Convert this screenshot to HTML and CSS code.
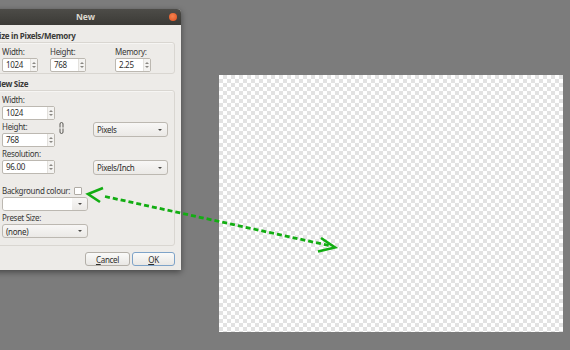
FILE: index.html
```html
<!DOCTYPE html>
<html>
<head>
<meta charset="utf-8">
<link rel="stylesheet" href="styles.css">
</head>
<body>
<div class="desk">
  <div class="dialog">
    <div class="titlebar">
      <span class="title">New</span>
      <span class="close"></span>
    </div>
    <div class="content">
      <div class="sec">Size in Pixels/Memory</div>
      <div class="group g1">
        <div class="cell"><div class="lbl">Width:</div><div class="spin w36"><span class="field">1024</span><span class="arrows"><i class="up"></i><i class="dn"></i></span></div></div>
        <div class="cell"><div class="lbl">Height:</div><div class="spin w36"><span class="field">768</span><span class="arrows"><i class="up"></i><i class="dn"></i></span></div></div>
        <div class="cell"><div class="lbl">Memory:</div><div class="spin w36"><span class="field">2.25</span><span class="arrows"><i class="up"></i><i class="dn"></i></span></div></div>
      </div>
      <div class="sec sec2">New Size</div>
      <div class="group g2">
        <div class="grid">
          <div class="lbl r1">Width:</div>
          <div class="spin w53 r2"><span class="field">1024</span><span class="arrows"><i class="up"></i><i class="dn"></i></span></div>
          <div class="lbl r3">Height:</div>
          <div class="spin w53 r4"><span class="field">768</span><span class="arrows"><i class="up"></i><i class="dn"></i></span></div>
          <div class="lbl r5">Resolution:</div>
          <div class="spin w53 r6"><span class="field">96.00</span><span class="arrows"><i class="up"></i><i class="dn"></i></span></div>
          <svg class="chain" width="5" height="12" viewBox="0 0 5 12"><path d="M1 5.5V2a1.5 1.5 0 0 1 3 0v3.5M1 6.5V10a1.5 1.5 0 0 0 3 0V6.5" fill="none" stroke="#5a5955" stroke-width="1"/></svg>
          <div class="combo pix"><span>Pixels</span><i class="caret"></i></div>
          <div class="combo ppi"><span>Pixels/Inch</span><i class="caret"></i></div>
        </div>
        <div class="bgrow lbl">Background colour:<span class="swatch"></span></div>
        <div class="colcombo"><span class="white"></span><span class="btnpart"><i class="caret"></i></span></div>
        <div class="lbl preset">Preset Size:</div>
        <div class="combo wide"><span>(none)</span><i class="caret"></i></div>
      </div>
      <div class="buttons">
        <div class="btn cancel"><u>C</u>ancel</div>
        <div class="btn ok"><u>O</u>K</div>
      </div>
    </div>
  </div>
  <div class="canvas"></div>
</div>
<svg class="arrow" width="570" height="350" viewBox="0 0 570 350">
  <polyline points="103,188 88,194 100,202" fill="none" stroke="#12ad12" stroke-width="2.6" stroke-linejoin="miter"/>
  <line x1="105" y1="196.5" x2="329" y2="245.5" stroke="#12ad12" stroke-width="2.8" stroke-dasharray="5 3"/>
  <polyline points="321,238 335,247.5 318,251.5" fill="none" stroke="#12ad12" stroke-width="2.6"/>
</svg>
</body>
</html>
```

FILE: styles.css
```css
* { box-sizing: border-box; }
body {
  margin: 0;
  width: 570px;
  height: 350px;
  background: #7c7c7c;
  overflow: hidden;
  position: relative;
  font-family: "Noto Sans", "Liberation Sans", Arial, sans-serif;
  font-size: 8px;
  letter-spacing: -0.3px;
  color: #3a3a38;
}
.desk { display: flex; align-items: flex-start; }
.dialog {
  flex: none;
  margin: 9px 0 0 -13px;
  width: 194px;
  background: #edebe8;
  border-radius: 4px 4px 0 0;
  box-shadow: 0 2px 6px rgba(0,0,0,0.45);
}
.titlebar {
  height: 16px;
  display: grid;
  grid-template-columns: 1fr auto 1fr;
  align-items: center;
  padding: 0 4px 0 7px;
  background: linear-gradient(#4d4c48, #3b3a36);
  border-radius: 4px 4px 0 0;
}
.title { grid-column: 2; font-weight: bold; color: #dcd8cf; font-size: 8.5px; line-height: 10px; letter-spacing: 0; }
.close {
  grid-column: 3; justify-self: end;
  width: 8px; height: 8px; border-radius: 50%;
  background: radial-gradient(circle at 45% 40%, #f4824f, #dd4f1f);
}
.content { padding: 6px 6px 4px 8px; }
.sec { font-weight: bold; line-height: 10px; height: 10px; margin-bottom: 1px; white-space: nowrap; }
.sec2 { margin-top: 5px; }
.group {
  border: 1px solid #d9d6d1;
  border-radius: 3px;
  padding-left: 6px;
  box-shadow: inset 1px 1px 0 #f6f5f3;
}
.g1 {
  padding-top: 4px; padding-bottom: 1px;
  display: grid;
  grid-template-columns: 48px 65px 37px;
}
.lbl { line-height: 10px; height: 10px; margin-bottom: 1px; white-space: nowrap; }
.spin {
  display: flex;
  height: 14px;
  background: #fff;
  border: 1px solid #bcb8b1;
  border-radius: 2px;
}
.w36 { width: 36px; }
.w53 { width: 53px; }
.field { flex: 1; line-height: 12px; padding-left: 3px; color: #2e2e2c; }
.arrows {
  width: 7px;
  display: flex; flex-direction: column; align-items: center; justify-content: space-around;
  background: #f4f3f1;
  border-left: 1px solid #e3e1dd;
  padding: 2px 0;
}
.up, .dn { width: 0; height: 0; border-left: 2px solid transparent; border-right: 2px solid transparent; }
.up { border-bottom: 2px solid #8a8883; }
.dn { border-top: 2px solid #8a8883; }
.g2 { padding-top: 4px; padding-bottom: 7px; }
.grid {
  display: grid;
  grid-template-columns: 57px 5px 29px 75px;
  grid-template-rows: 11px 16px 11px 16px 11px 14px;
}
.grid .lbl { margin: 0; }
.r1 { grid-row: 1; grid-column: 1; }
.r2 { grid-row: 2; grid-column: 1; }
.r3 { grid-row: 3; grid-column: 1; }
.r4 { grid-row: 4; grid-column: 1; }
.r5 { grid-row: 5; grid-column: 1; }
.r6 { grid-row: 6; grid-column: 1; }
.chain { grid-row: 3 / span 2; grid-column: 2; align-self: start; }
.combo {
  display: flex; align-items: center; justify-content: space-between;
  height: 15px;
  padding: 0 5px 0 3px;
  border: 1px solid #bcb8b1;
  border-radius: 3px;
  background: linear-gradient(#f8f7f6, #ebe9e6);
  color: #2e2e2c;
}
.pix { grid-row: 3 / span 2; grid-column: 4; align-self: start; }
.ppi { grid-row: 6; grid-column: 4; }
.caret { width: 0; height: 0; border-left: 2px solid transparent; border-right: 2px solid transparent; border-top: 2px solid #4a4946; }
.bgrow { margin-top: 12px; display: flex; align-items: center; gap: 4px; }
.swatch { width: 8px; height: 8px; background: #fff; border: 1px solid #b0aca5; border-radius: 1px; }
.colcombo {
  display: flex;
  width: 86px; height: 14px;
  border: 1px solid #bcb8b1;
  border-radius: 3px;
  overflow: hidden;
}
.white { flex: 1; background: #fff; }
.btnpart { width: 15px; display: flex; align-items: center; justify-content: center; background: linear-gradient(#f8f7f6, #ebe9e6); }
.preset { margin-top: 2px; }
.wide { width: 86px; height: 14px; }
.buttons { display: flex; justify-content: flex-end; gap: 2px; margin-top: 6px; }
.btn {
  height: 14px;
  display: flex; align-items: center; justify-content: center;
  border: 1px solid #b3afa8;
  border-radius: 3px;
  background: linear-gradient(#fafaf9, #e9e7e4);
  color: #2e2e2c;
}
.cancel { width: 45px; }
.ok { width: 43px; border-color: #7ea3c8; }
.canvas {
  flex: none;
  margin: 75px 0 0 38px;
  width: 344px; height: 257px;
  background-color: #fff;
  background-image: conic-gradient(#e2e2e2 25%, #fff 0 50%, #e2e2e2 0 75%, #fff 0);
  background-size: 8px 8px;
}
.arrow { position: absolute; left: 0; top: 0; pointer-events: none; }
```
